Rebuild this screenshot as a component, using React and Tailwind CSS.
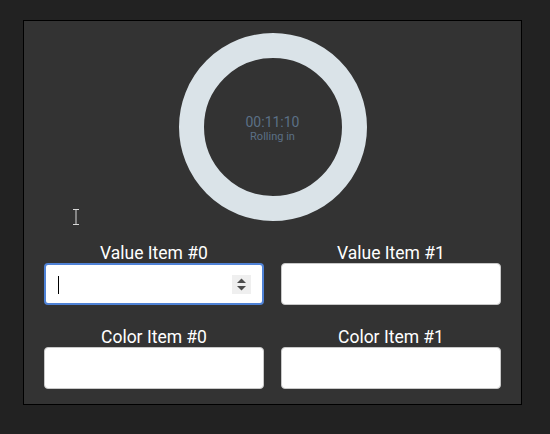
import React from 'react'

function Ring() {
  return (
    <div className="flex justify-center">
      <div className="w-[188px] h-[188px] rounded-full border-[25px] border-[#dae3e8] flex flex-col items-center justify-center">
        <span className="text-[14px] leading-[16px] text-[#5b7086] mt-[2px]">00:11:10</span>
        <span className="text-[11px] leading-[13px] text-[#5b7086]">Rolling in</span>
      </div>
    </div>
  )
}

function Field({ label, focused }) {
  return (
    <div className="flex flex-col">
      <label className="text-[17.5px] leading-[20px] text-white text-center">{label}</label>
      {focused ? (
        <div className="relative h-[42px] rounded-[4px] bg-white border-2 border-[#4f82d6]">
          <input type="text" className="w-full h-full outline-none bg-transparent px-3" aria-label={label} />
          <div className="absolute left-[12px] top-[11px] w-px h-[18px] bg-black" />
          <div className="absolute right-[11px] top-[10px] w-[19px] h-[19px] bg-[#efefef] flex items-center justify-center">
            <svg width="11" height="15" viewBox="0 0 11 15">
              <path d="M1 6 L5.5 1.5 L10 6 Z" fill="#4d4d4d" />
              <path d="M1 9 L5.5 13.5 L10 9 Z" fill="#4d4d4d" />
            </svg>
          </div>
        </div>
      ) : (
        <input type="text" aria-label={label} className="h-[42px] rounded-[4px] bg-white border border-[#c8c8c8] outline-none px-3" />
      )}
    </div>
  )
}

export default function App() {
  return (
    <div className="w-[550px] h-[434px] bg-[#222222] pt-[20px] pl-[23px] font-['Roboto',sans-serif]">
      <div className="relative w-[499px] h-[385px] bg-[#333333] border border-black pt-[12px] px-[20px]">
        <Ring />
        <svg className="absolute left-[48px] top-[188px]" width="8" height="16" viewBox="0 0 8 16">
          <path d="M1 0.5 H7 M4 0.5 V15.5 M1 15.5 H7" stroke="#d8d8d8" strokeWidth="1" fill="none" />
        </svg>
        <div className="grid grid-cols-2 gap-x-[17px] gap-y-[22px] mt-[22px]">
          <Field label="Value Item #0" focused />
          <Field label="Value Item #1" />
          <Field label="Color Item #0" />
          <Field label="Color Item #1" />
        </div>
      </div>
    </div>
  )
}
